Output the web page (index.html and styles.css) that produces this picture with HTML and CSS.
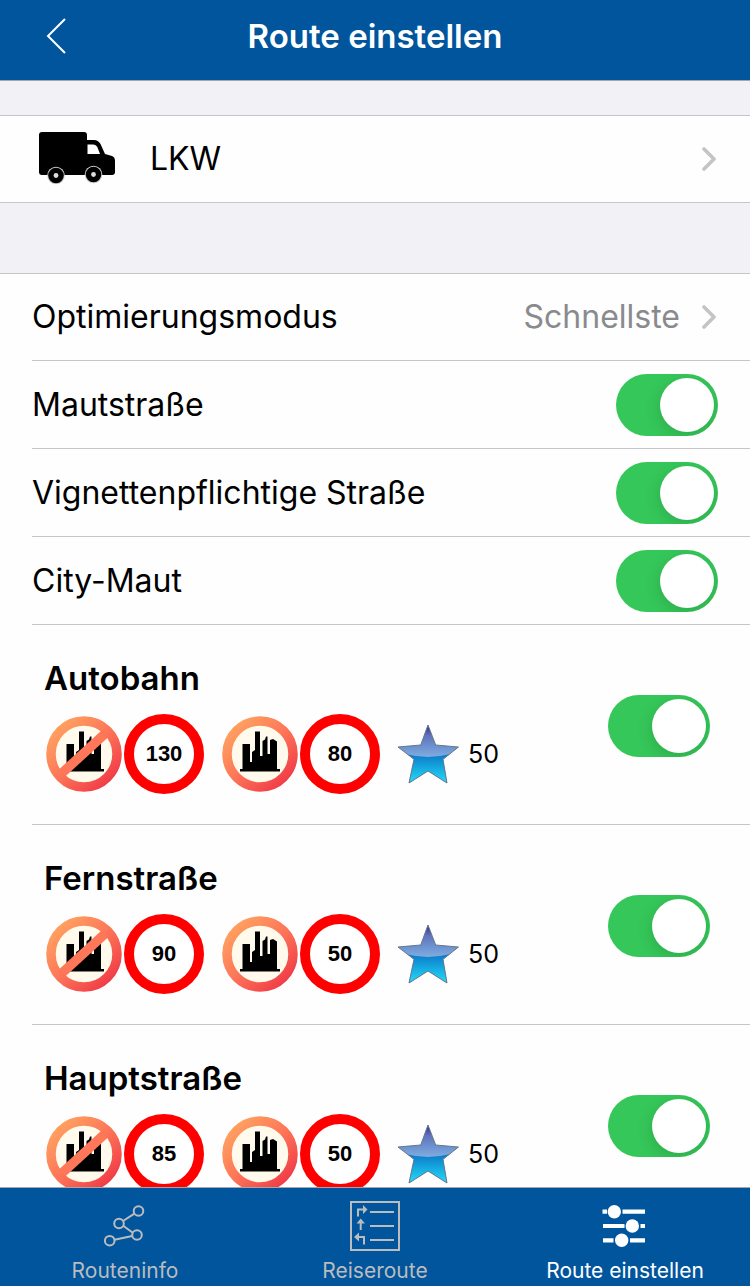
FILE: index.html
```html
<!DOCTYPE html>
<html lang="de">

<head>
    <title>Route einstellen</title>
    <meta charset="UTF-8">
    <meta name="viewport" content="width=device-width, initial-scale=1.0">
    <link rel="stylesheet" href="styles.css">
</head>

<body>
    <!-- shared icons -->
    <svg class="sprite" width="0" height="0" aria-hidden="true">
        <defs>
            <linearGradient id="ring" x1="10" y1="10" x2="66" y2="70" gradientUnits="userSpaceOnUse">
                <stop offset="0" stop-color="#ffa562" />
                <stop offset="0.5" stop-color="#fd7758" />
                <stop offset="1" stop-color="#f03a47" />
            </linearGradient>
            <linearGradient id="star-top" x1="0" y1="10" x2="0" y2="43" gradientUnits="userSpaceOnUse">
                <stop offset="0" stop-color="#23238c" />
                <stop offset="0.35" stop-color="#6272bb" />
                <stop offset="0.7" stop-color="#6d93d0" />
                <stop offset="1" stop-color="#80acdf" />
            </linearGradient>
            <linearGradient id="star-bottom" x1="0" y1="42" x2="0" y2="66" gradientUnits="userSpaceOnUse">
                <stop offset="0" stop-color="#0c7fcb" />
                <stop offset="1" stop-color="#20d2f5" />
            </linearGradient>
            <clipPath id="star-clip">
                <path d="M32 11 39.7 31 62.5 33 47 45.3 51 69 32 57 13 69 18 45.3 2 33 24.7 31Z" />
            </clipPath>
        </defs>
        <symbol id="city" viewBox="0 0 80 80">
            <circle cx="40" cy="40" r="33" fill="#fffaeb" stroke="url(#ring)" stroke-width="9.5" />
            <path d="M20 55H22.500V30H30V48H32V38L35 36V17.500H40V42H42.500V27L45 25.500 46 22.500H47.500V40H50V26L53 25 57 27.500V55H60V57.500H20Z" />
        </symbol>
        <symbol id="no-city" viewBox="0 0 80 80">
            <circle cx="40" cy="40" r="33" fill="#fffaeb" />
            <path d="M20 55H22.500V30H30V48H32V38L35 36V17.500H40V42H42.500V27L45 25.500 46 22.500H47.500V40H50V26L53 25 57 27.500V55H60V57.500H20Z" />
            <path d="M64 17 17 60" fill="none" stroke="#fd7758" stroke-width="9.500" />
            <circle cx="40" cy="40" r="33" fill="none" stroke="url(#ring)" stroke-width="9.5" />
        </symbol>
        <symbol id="star" viewBox="0 0 64 80">
            <g clip-path="url(#star-clip)">
                <rect width="64" height="80" fill="url(#star-top)" />
                <path d="M10 40Q32 46 54 40V75H10Z" fill="url(#star-bottom)" />
            </g>
            <path d="M32 11 39.7 31 62.5 33 47 45.3 51 69 32 57 13 69 18 45.3 2 33 24.7 31Z" fill="none" stroke="#66788c" stroke-width="1" />
        </symbol>
        <symbol id="chevron" viewBox="0 0 16 26">
            <path d="M2 3 12 13 2 23" fill="none" stroke="#c4c4c7" stroke-width="3.600" stroke-linecap="round" stroke-linejoin="round" />
        </symbol>
    </svg>

    <header class="header">
        <a class="back" href="#" aria-label="Zurück">
            <svg width="20" height="36" viewBox="0 0 20 36">
                <path d="M19 1 2 18 19 35" fill="none" stroke="#fff" stroke-width="2" />
            </svg>
        </a>
        <h1>Route einstellen</h1>
    </header>

    <main class="content">
        <section class="group">
            <a class="vehicle" href="#">
                <svg width="80" height="54" viewBox="0 0 80 54">
                    <path d="M4 0H46Q49 0 49 3V8H56Q60 8 62.500 12L67 22 74 24Q77 25 77 29V40Q77 43 74 43H4Q1 43 1 40V3Q1 0 4 0Z" />
                    <path d="M49.500 12.500H55Q58 12.500 59.500 15.500L62 22H49.500Z" fill="#fff" />
                    <circle cx="18" cy="43.500" r="8.800" fill="#ccc" />
                    <circle cx="18" cy="43.500" r="7.800" />
                    <circle cx="18" cy="43.500" r="2.400" fill="#ddd" />
                    <circle cx="55.500" cy="42.500" r="8.800" fill="#ccc" />
                    <circle cx="55.500" cy="42.500" r="7.800" />
                    <circle cx="55.500" cy="42.500" r="2.400" fill="#ddd" />
                </svg>
                <span class="label">LKW</span>
                <svg class="chevron"><use href="#chevron" /></svg>
            </a>
        </section>

        <section class="group">
            <a class="row" href="#">
                <span class="label">Optimierungsmodus</span>
                <span class="value">Schnellste</span>
                <svg class="chevron"><use href="#chevron" /></svg>
            </a>
            <div class="row">
                <label class="label" for="toll">Mautstraße</label>
                <input class="switch" type="checkbox" id="toll" checked>
            </div>
            <div class="row">
                <label class="label" for="vignette">Vignettenpflichtige Straße</label>
                <input class="switch" type="checkbox" id="vignette" checked>
            </div>
            <div class="row">
                <label class="label" for="city-toll">City-Maut</label>
                <input class="switch" type="checkbox" id="city-toll" checked>
            </div>

            <div class="row road">
                <div class="road-info">
                    <label class="road-name" for="autobahn">Autobahn</label>
                    <div class="limits">
                        <svg class="sign"><use href="#no-city" /></svg>
                        <span class="speed">130</span>
                        <svg class="sign inner"><use href="#city" /></svg>
                        <span class="speed">80</span>
                        <svg class="star"><use href="#star" /></svg>
                        <span class="rating">50</span>
                    </div>
                </div>
                <input class="switch" type="checkbox" id="autobahn" checked>
            </div>
            <div class="row road">
                <div class="road-info">
                    <label class="road-name" for="fernstrasse">Fernstraße</label>
                    <div class="limits">
                        <svg class="sign"><use href="#no-city" /></svg>
                        <span class="speed">90</span>
                        <svg class="sign inner"><use href="#city" /></svg>
                        <span class="speed">50</span>
                        <svg class="star"><use href="#star" /></svg>
                        <span class="rating">50</span>
                    </div>
                </div>
                <input class="switch" type="checkbox" id="fernstrasse" checked>
            </div>
            <div class="row road">
                <div class="road-info">
                    <label class="road-name" for="hauptstrasse">Hauptstraße</label>
                    <div class="limits">
                        <svg class="sign"><use href="#no-city" /></svg>
                        <span class="speed">85</span>
                        <svg class="sign inner"><use href="#city" /></svg>
                        <span class="speed">50</span>
                        <svg class="star"><use href="#star" /></svg>
                        <span class="rating">50</span>
                    </div>
                </div>
                <input class="switch" type="checkbox" id="hauptstrasse" checked>
            </div>
        </section>
    </main>

    <nav class="tabs">
        <a class="tab" href="#">
            <svg width="50" height="50" viewBox="0 0 50 50" fill="none" stroke="currentColor" stroke-width="2">
                <circle cx="38.500" cy="10" r="4.800" />
                <circle cx="19" cy="22.500" r="4.800" />
                <circle cx="37" cy="34" r="4.800" />
                <circle cx="9.700" cy="39.700" r="4.800" />
                <path d="M34.400 12.700 23 20M23.200 24.700 32.800 31.700M32.200 35 14.500 38.800" />
            </svg>
            <span>Routeninfo</span>
        </a>
        <a class="tab" href="#">
            <svg width="50" height="50" viewBox="0 0 50 50" fill="none" stroke="currentColor" stroke-width="2">
                <path d="M1 1H49V49H1Z" />
                <path d="M20 11H44M20 25H44M20 39H44" />
                <path d="M8 15.500V8.500H14M10.700 29V21M14 43.500V36H9" />
                <path d="M13 4 17.500 8.500 13 13ZM6.500 22.500 10.700 17.500 15 22.500ZM9 31.500 4 36 9 40.500Z" fill="currentColor" stroke="none" />
            </svg>
            <span>Reiseroute</span>
        </a>
        <a class="tab active" href="#">
            <svg width="50" height="50" viewBox="0 0 50 50" fill="currentColor">
                <path d="M2.500 10.700H7M22.500 10.700H45M3 25H24.500M40.500 25H45M3 39.300H13.500M30 39.300H45" stroke="currentColor" stroke-width="4.200" />
                <circle cx="14.300" cy="10.700" r="6.700" />
                <circle cx="32.300" cy="25" r="6.700" />
                <circle cx="21.700" cy="39.300" r="6.700" />
            </svg>
            <span>Route einstellen</span>
        </a>
    </nav>
</body>

</html>
```
FILE: styles.css
```css
* {
    box-sizing: border-box;
}

body {
    margin: 0;
    height: 100vh;
    display: flex;
    flex-direction: column;
    font-family: Inter, "Liberation Sans", sans-serif;
    font-size: 32px;
    line-height: 40px;
    color: #000;
    background-color: #f2f1f6;
}

a {
    color: inherit;
    text-decoration: none;
}

svg {
    display: block;
    flex: none;
}

.sprite {
    position: absolute;
}

.header {
    display: grid;
    grid-template-columns: 64px 1fr 64px;
    align-items: center;
    flex: none;
    padding: 16px 0 24px;
    color: #fff;
    background-color: #00559d;
    border-bottom: 1px solid #a5a5ab;
}

.back {
    padding-left: 46px;
}

.header h1 {
    margin: 0;
    font-size: 33px;
    font-weight: 600;
    text-align: center;
}

.content {
    flex: 1;
    min-height: 0;
    overflow-y: auto;
    scrollbar-width: none;
}

.group {
    margin-bottom: 70px;
    padding-left: 32px;
    background-color: #fefefe;
    border-top: 1px solid #c6c6c9;
    border-bottom: 1px solid #c6c6c9;
}

.group:first-child {
    margin-top: 34px;
}

.vehicle,
.row {
    display: flex;
    align-items: center;
    min-height: 88px;
    padding-right: 32px;
}

.row {
    border-bottom: 1px solid #c6c6c9;
}

.group .row:first-child {
    min-height: 87px;
}

.row:last-child {
    border-bottom: none;
}

.vehicle {
    min-height: 86px;
    padding-left: 6px;
}

.vehicle .label {
    padding-left: 32px;
}

.label {
    flex: 1;
}

.value {
    color: #8a8a8e;
}

.chevron {
    width: 16px;
    height: 26px;
    margin-left: 22px;
}

/* toggle */
.switch {
    appearance: none;
    flex: none;
    width: 102px;
    height: 62px;
    margin: 0;
    padding: 4px;
    border-radius: 31px;
    background-color: #e9e9eb;
    overflow: hidden;
    cursor: pointer;
}

.switch::before {
    content: "";
    display: block;
    width: 54px;
    height: 54px;
    border-radius: 50%;
    background-color: #fff;
    box-shadow: 0 4px 16px rgba(0, 0, 0, 0.15);
}

.switch:checked {
    background-color: #35c759;
}

.switch:checked::before {
    margin-left: auto;
}

/* road types with speed limits */
.road {
    padding: 33px 40px 30px 12px;
}

.road-info {
    flex: 1;
}

.road-name {
    display: block;
    margin-bottom: 16px;
    font-size: 33px;
    font-weight: 600;
}

.limits {
    display: flex;
    align-items: center;
}

.sign {
    width: 80px;
    height: 80px;
}

.inner,
.star {
    margin-left: 16px;
}

.speed {
    display: flex;
    align-items: center;
    justify-content: center;
    width: 80px;
    height: 80px;
    border: 10px solid #fe0000;
    border-radius: 50%;
    background-color: #fff;
    font-family: "Liberation Sans", sans-serif;
    font-size: 22px;
    font-weight: bold;
}

.star {
    width: 64px;
    height: 80px;
}

.rating {
    margin-left: 8px;
    font-size: 25px;
}

.tabs {
    display: grid;
    grid-template-columns: repeat(3, 1fr);
    flex: none;
    color: #bbbcbe;
    background-color: #00559d;
    border-top: 1px solid #a5a5ab;
}

.tab {
    display: flex;
    flex-direction: column;
    align-items: center;
    gap: 8px;
    padding: 13px 0 3px;
    font-size: 21px;
    line-height: 24px;
}

.tab.active {
    color: #fff;
}
```
